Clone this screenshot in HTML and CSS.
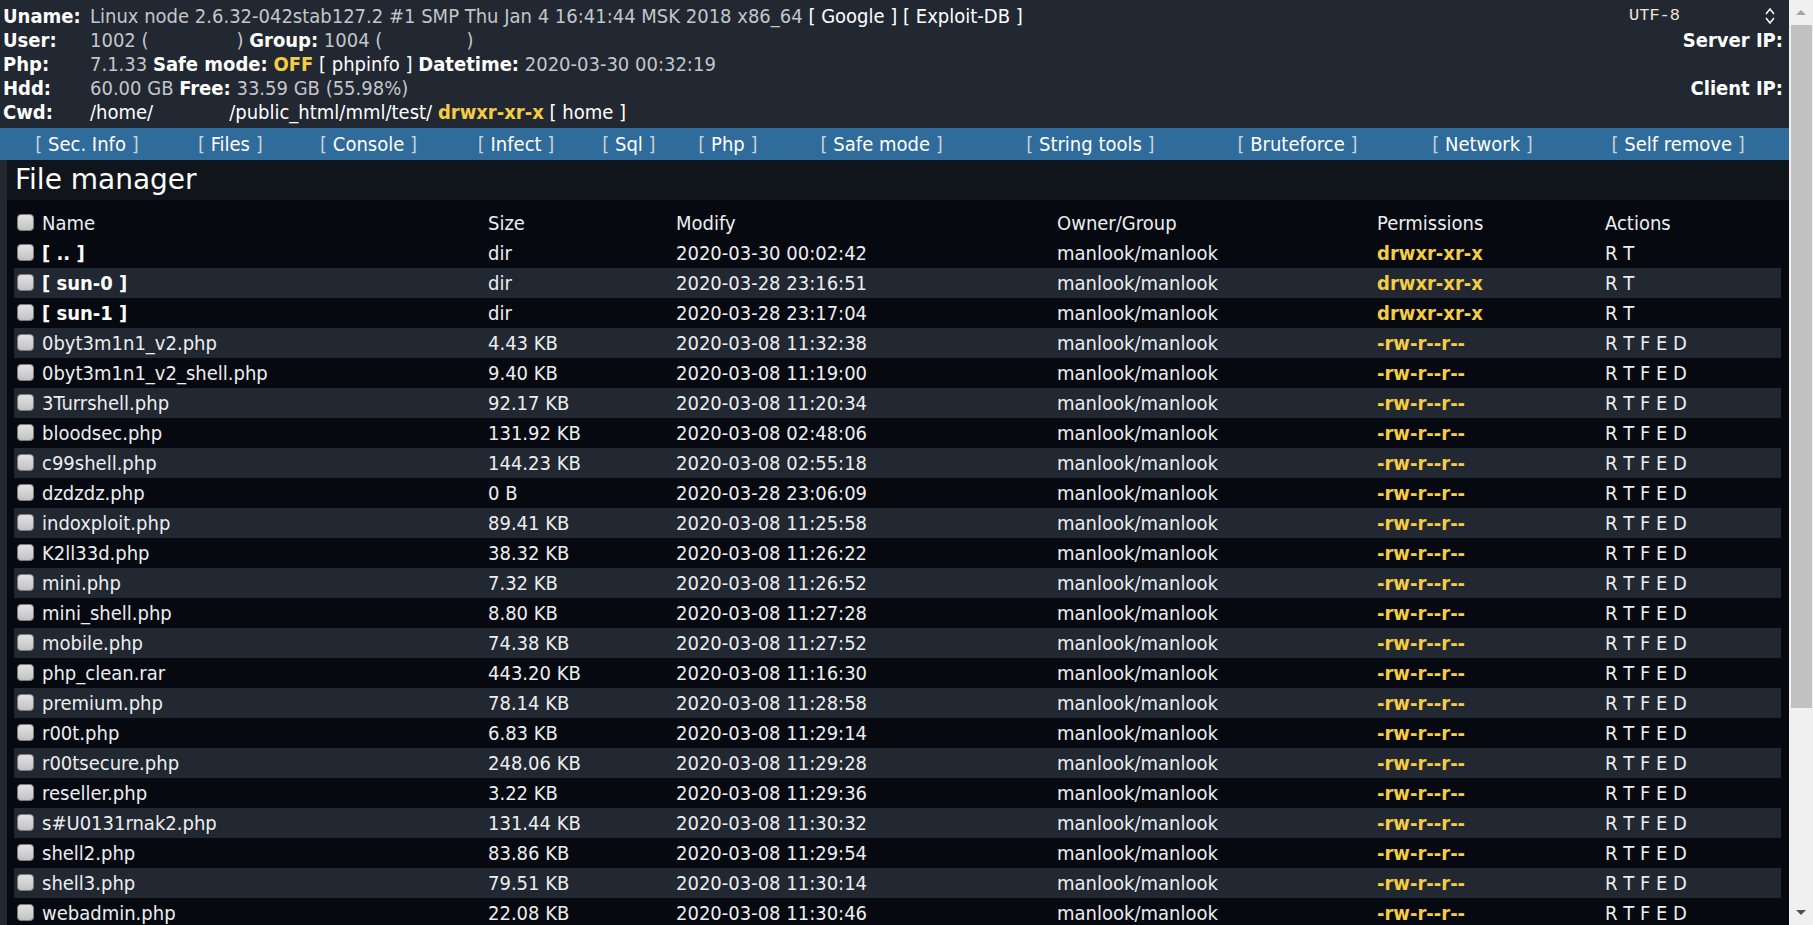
FILE: index.html
```html
<!DOCTYPE html>
<html>
<head>
<meta charset="utf-8">
<title>File manager</title>
<link rel="stylesheet" href="styles.css">
</head>
<body>
<div class="page">
  <div class="info">
    <div class="labels">
      <div>Uname:</div>
      <div>User:</div>
      <div>Php:</div>
      <div>Hdd:</div>
      <div>Cwd:</div>
    </div>
    <div class="values">
      <div>Linux node 2.6.32-042stab127.2 #1 SMP Thu Jan 4 16:41:44 MSK 2018 x86_64 <a class="lnk">[ Google ]</a> <a class="lnk">[ Exploit-DB ]</a></div>
      <div>1002 (<span class="blank b1"></span>) <b>Group:</b> 1004 (<span class="blank b2"></span>)</div>
      <div>7.1.33 <b>Safe mode:</b> <b class="gold">OFF</b> <a class="lnk">[ phpinfo ]</a> <b>Datetime:</b> 2020-03-30 00:32:19</div>
      <div>60.00 GB <b>Free:</b> 33.59 GB (55.98%)</div>
      <div><a class="lnk">/home/</a><span class="blank b3"></span><a class="lnk">/public_html/mml/test/</a> <b class="gold">drwxr-xr-x</b> <a class="lnk">[ home ]</a></div>
    </div>
    <div class="right">
      <div class="charset"><span class="cs-text">UTF-8</span><svg class="cs-arrows" width="12" height="18" viewBox="0 0 12 18"><path d="M2 7 L6 2 L10 7 M2 11 L6 16 L10 11" fill="none" stroke="#ffffff" stroke-width="1.5"/></svg></div>
      <div><b>Server IP:</b></div>
      <div>&nbsp;</div>
      <div><b>Client IP:</b></div>
      <div>&nbsp;</div>
    </div>
  </div>
  <table class="menu">
    <tr>
      <th><span class="br">[</span> Sec. Info <span class="br">]</span></th>
      <th><span class="br">[</span> Files <span class="br">]</span></th>
      <th><span class="br">[</span> Console <span class="br">]</span></th>
      <th><span class="br">[</span> Infect <span class="br">]</span></th>
      <th><span class="br">[</span> Sql <span class="br">]</span></th>
      <th><span class="br">[</span> Php <span class="br">]</span></th>
      <th><span class="br">[</span> Safe mode <span class="br">]</span></th>
      <th><span class="br">[</span> String tools <span class="br">]</span></th>
      <th><span class="br">[</span> Bruteforce <span class="br">]</span></th>
      <th><span class="br">[</span> Network <span class="br">]</span></th>
      <th><span class="br">[</span> Self remove <span class="br">]</span></th>
    </tr>
  </table>
  <div class="wrap">
    <h1>File manager</h1>
    <div class="content">
      <table class="files">
        <colgroup>
          <col class="c-name"><col class="c-size"><col class="c-mod"><col class="c-own"><col class="c-perm"><col>
        </colgroup>
        <thead>
          <tr><th><span class="cb"></span>Name</th><th>Size</th><th>Modify</th><th>Owner/Group</th><th>Permissions</th><th>Actions</th></tr>
        </thead>
        <tbody>
          <tr><td><span class="cb"></span><b>[ .. ]</b></td><td>dir</td><td>2020-03-30 00:02:42</td><td>manlook/manlook</td><td><b class="gold">drwxr-xr-x</b></td><td>R T</td></tr>
          <tr><td><span class="cb"></span><b>[ sun-0 ]</b></td><td>dir</td><td>2020-03-28 23:16:51</td><td>manlook/manlook</td><td><b class="gold">drwxr-xr-x</b></td><td>R T</td></tr>
          <tr><td><span class="cb"></span><b>[ sun-1 ]</b></td><td>dir</td><td>2020-03-28 23:17:04</td><td>manlook/manlook</td><td><b class="gold">drwxr-xr-x</b></td><td>R T</td></tr>
          <tr><td><span class="cb"></span>0byt3m1n1_v2.php</td><td>4.43 KB</td><td>2020-03-08 11:32:38</td><td>manlook/manlook</td><td><b class="gold">-rw-r--r--</b></td><td>R T F E D</td></tr>
          <tr><td><span class="cb"></span>0byt3m1n1_v2_shell.php</td><td>9.40 KB</td><td>2020-03-08 11:19:00</td><td>manlook/manlook</td><td><b class="gold">-rw-r--r--</b></td><td>R T F E D</td></tr>
          <tr><td><span class="cb"></span>3Turrshell.php</td><td>92.17 KB</td><td>2020-03-08 11:20:34</td><td>manlook/manlook</td><td><b class="gold">-rw-r--r--</b></td><td>R T F E D</td></tr>
          <tr><td><span class="cb"></span>bloodsec.php</td><td>131.92 KB</td><td>2020-03-08 02:48:06</td><td>manlook/manlook</td><td><b class="gold">-rw-r--r--</b></td><td>R T F E D</td></tr>
          <tr><td><span class="cb"></span>c99shell.php</td><td>144.23 KB</td><td>2020-03-08 02:55:18</td><td>manlook/manlook</td><td><b class="gold">-rw-r--r--</b></td><td>R T F E D</td></tr>
          <tr><td><span class="cb"></span>dzdzdz.php</td><td>0 B</td><td>2020-03-28 23:06:09</td><td>manlook/manlook</td><td><b class="gold">-rw-r--r--</b></td><td>R T F E D</td></tr>
          <tr><td><span class="cb"></span>indoxploit.php</td><td>89.41 KB</td><td>2020-03-08 11:25:58</td><td>manlook/manlook</td><td><b class="gold">-rw-r--r--</b></td><td>R T F E D</td></tr>
          <tr><td><span class="cb"></span>K2ll33d.php</td><td>38.32 KB</td><td>2020-03-08 11:26:22</td><td>manlook/manlook</td><td><b class="gold">-rw-r--r--</b></td><td>R T F E D</td></tr>
          <tr><td><span class="cb"></span>mini.php</td><td>7.32 KB</td><td>2020-03-08 11:26:52</td><td>manlook/manlook</td><td><b class="gold">-rw-r--r--</b></td><td>R T F E D</td></tr>
          <tr><td><span class="cb"></span>mini_shell.php</td><td>8.80 KB</td><td>2020-03-08 11:27:28</td><td>manlook/manlook</td><td><b class="gold">-rw-r--r--</b></td><td>R T F E D</td></tr>
          <tr><td><span class="cb"></span>mobile.php</td><td>74.38 KB</td><td>2020-03-08 11:27:52</td><td>manlook/manlook</td><td><b class="gold">-rw-r--r--</b></td><td>R T F E D</td></tr>
          <tr><td><span class="cb"></span>php_clean.rar</td><td>443.20 KB</td><td>2020-03-08 11:16:30</td><td>manlook/manlook</td><td><b class="gold">-rw-r--r--</b></td><td>R T F E D</td></tr>
          <tr><td><span class="cb"></span>premium.php</td><td>78.14 KB</td><td>2020-03-08 11:28:58</td><td>manlook/manlook</td><td><b class="gold">-rw-r--r--</b></td><td>R T F E D</td></tr>
          <tr><td><span class="cb"></span>r00t.php</td><td>6.83 KB</td><td>2020-03-08 11:29:14</td><td>manlook/manlook</td><td><b class="gold">-rw-r--r--</b></td><td>R T F E D</td></tr>
          <tr><td><span class="cb"></span>r00tsecure.php</td><td>248.06 KB</td><td>2020-03-08 11:29:28</td><td>manlook/manlook</td><td><b class="gold">-rw-r--r--</b></td><td>R T F E D</td></tr>
          <tr><td><span class="cb"></span>reseller.php</td><td>3.22 KB</td><td>2020-03-08 11:29:36</td><td>manlook/manlook</td><td><b class="gold">-rw-r--r--</b></td><td>R T F E D</td></tr>
          <tr><td><span class="cb"></span>s#U0131rnak2.php</td><td>131.44 KB</td><td>2020-03-08 11:30:32</td><td>manlook/manlook</td><td><b class="gold">-rw-r--r--</b></td><td>R T F E D</td></tr>
          <tr><td><span class="cb"></span>shell2.php</td><td>83.86 KB</td><td>2020-03-08 11:29:54</td><td>manlook/manlook</td><td><b class="gold">-rw-r--r--</b></td><td>R T F E D</td></tr>
          <tr><td><span class="cb"></span>shell3.php</td><td>79.51 KB</td><td>2020-03-08 11:30:14</td><td>manlook/manlook</td><td><b class="gold">-rw-r--r--</b></td><td>R T F E D</td></tr>
          <tr><td><span class="cb"></span>webadmin.php</td><td>22.08 KB</td><td>2020-03-08 11:30:46</td><td>manlook/manlook</td><td><b class="gold">-rw-r--r--</b></td><td>R T F E D</td></tr>
        </tbody>
      </table>
    </div>
  </div>
</div>
<div class="scrollbar">
  <div class="sb-up"></div>
  <div class="sb-track"><div class="sb-thumb"></div></div>
  <div class="sb-down"></div>
</div>
</body>
</html>
```
FILE: styles.css
```css
html, body {
  margin: 0;
  padding: 0;
  height: 100%;
}
body {
  display: flex;
  overflow: hidden;
  background: #222831;
  color: #e6e6e6;
  font-family: "DejaVu Sans", Verdana, sans-serif;
  font-stretch: condensed;
  font-size: 20px;
}
.page {
  flex: 1;
  min-width: 0;
  overflow: hidden;
}
.info {
  display: flex;
  padding: 4px 6px 4px 3px;
  line-height: 24px;
  height: 120px;
}
.labels {
  width: 87px;
  font-weight: bold;
  color: #ffffff;
}
.values {
  flex: 1;
  color: #c3c6cb;
  white-space: nowrap;
}
.values b {
  color: #ffffff;
}
.lnk {
  color: #ffffff;
}
.gold {
  color: #f5cd45 !important;
  font-weight: bold;
}
.blank {
  display: inline-block;
}
.b1 { width: 88px; }
.b2 { width: 84px; }
.b3 { width: 76px; }
.right {
  text-align: right;
  color: #ffffff;
  white-space: nowrap;
}
.charset {
  display: flex;
  align-items: center;
  justify-content: flex-end;
  height: 24px;
  padding-right: 7px;
}
.cs-text {
  font-family: "Liberation Mono", "Courier New", monospace;
  font-stretch: normal;
  font-size: 17px;
  color: #efe6d2;
  margin-right: 84px;
}
.menu {
  width: 100%;
  border-collapse: collapse;
  background: #2f6b9b;
  height: 32px;
}
.menu th {
  font-weight: normal;
  color: #ffffff;
  padding: 0 3px;
  text-align: center;
  white-space: nowrap;
  line-height: 32px;
}
.menu .br {
  color: #c8d0d8;
}
.wrap {
  margin-left: 7px;
  background: #060910;
}
h1 {
  margin: 0;
  height: 40px;
  line-height: 40px;
  padding: 0 8px;
  font-size: 28px;
  font-stretch: normal;
  font-weight: normal;
  color: #ffffff;
  background: #10141b;
}
.content {
  padding: 8px 8px 0 7px;
}
.files {
  width: 100%;
  table-layout: fixed;
  border-collapse: collapse;
}
.c-name { width: 470px; }
.c-size { width: 188px; }
.c-mod { width: 381px; }
.c-own { width: 320px; }
.c-perm { width: 228px; }
.files tr {
  height: 30px;
}
.files th, .files td {
  padding: 0 4px;
  line-height: 30px;
  text-align: left;
  font-weight: normal;
  white-space: nowrap;
  overflow: hidden;
  color: #eceef0;
  vertical-align: middle;
}
.files th:first-child, .files td:first-child {
  padding-left: 3px;
}
.files td b {
  font-weight: bold;
  color: #ffffff;
}
.files tbody tr:nth-child(even) {
  background: #222831;
}
.cb {
  display: inline-block;
  box-sizing: border-box;
  width: 17px;
  height: 17px;
  border: 1px solid #7c7c7c;
  border-radius: 4px;
  background: linear-gradient(#e2e2e2, #c2c2c2);
  margin-right: 8px;
  vertical-align: -1px;
}
.scrollbar {
  width: 24px;
  flex: none;
  background: #f0f0f0;
  display: flex;
  flex-direction: column;
  align-items: center;
}
.sb-up, .sb-down {
  height: 25px;
  width: 100%;
  position: relative;
}
.sb-up::after {
  content: "";
  position: absolute;
  left: 7px;
  top: 10px;
  border-left: 5px solid transparent;
  border-right: 5px solid transparent;
  border-bottom: 5px solid #a3a3a3;
}
.sb-down::after {
  content: "";
  position: absolute;
  left: 7px;
  top: 10px;
  border-left: 5px solid transparent;
  border-right: 5px solid transparent;
  border-top: 5px solid #505050;
}
.sb-track {
  flex: 1;
  width: 100%;
  display: flex;
  justify-content: center;
}
.sb-thumb {
  width: 21px;
  height: 683px;
  margin-left: 1px;
  background: #c1c1c1;
}
```
